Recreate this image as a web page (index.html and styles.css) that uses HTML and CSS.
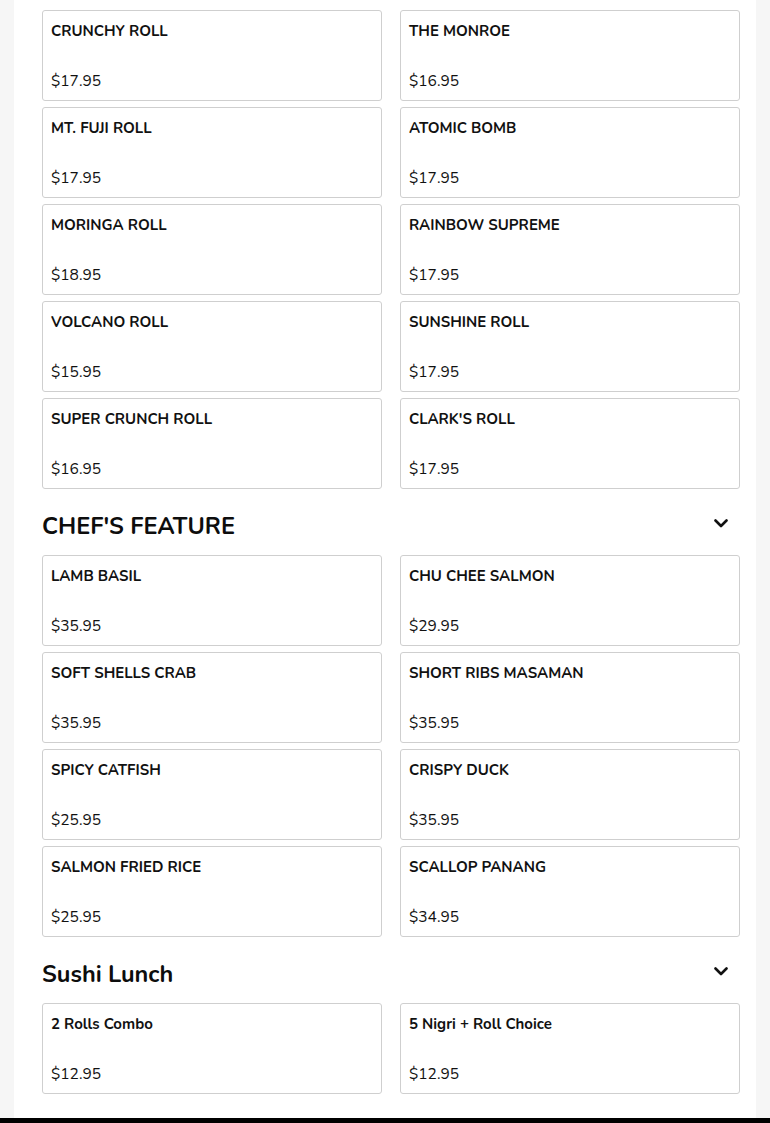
FILE: index.html
```html
<!DOCTYPE html>
<html>
<head>
<meta charset="utf-8">
<link rel="stylesheet" href="styles.css">
</head>
<body>
<main class="menu">
  <section class="section">
    <div class="grid">
      <div class="card"><div class="name">CRUNCHY ROLL</div><div class="price">$17.95</div></div>
      <div class="card"><div class="name">THE MONROE</div><div class="price">$16.95</div></div>
      <div class="card"><div class="name">MT. FUJI ROLL</div><div class="price">$17.95</div></div>
      <div class="card"><div class="name">ATOMIC BOMB</div><div class="price">$17.95</div></div>
      <div class="card"><div class="name">MORINGA ROLL</div><div class="price">$18.95</div></div>
      <div class="card"><div class="name">RAINBOW SUPREME</div><div class="price">$17.95</div></div>
      <div class="card"><div class="name">VOLCANO ROLL</div><div class="price">$15.95</div></div>
      <div class="card"><div class="name">SUNSHINE ROLL</div><div class="price">$17.95</div></div>
      <div class="card"><div class="name">SUPER CRUNCH ROLL</div><div class="price">$16.95</div></div>
      <div class="card"><div class="name">CLARK'S ROLL</div><div class="price">$17.95</div></div>
    </div>
  </section>
  <section class="section">
    <div class="head">
      <h2 class="title">CHEF'S FEATURE</h2>
      <svg class="chev" width="14" height="10" viewBox="0 0 14 10"><path d="M1.5 2.5 L7 8 L12.5 2.5" fill="none" stroke="#111" stroke-width="2.6" stroke-linecap="round" stroke-linejoin="round"/></svg>
    </div>
    <div class="grid">
      <div class="card"><div class="name">LAMB BASIL</div><div class="price">$35.95</div></div>
      <div class="card"><div class="name">CHU CHEE SALMON</div><div class="price">$29.95</div></div>
      <div class="card"><div class="name">SOFT SHELLS CRAB</div><div class="price">$35.95</div></div>
      <div class="card"><div class="name">SHORT RIBS MASAMAN</div><div class="price">$35.95</div></div>
      <div class="card"><div class="name">SPICY CATFISH</div><div class="price">$25.95</div></div>
      <div class="card"><div class="name">CRISPY DUCK</div><div class="price">$35.95</div></div>
      <div class="card"><div class="name">SALMON FRIED RICE</div><div class="price">$25.95</div></div>
      <div class="card"><div class="name">SCALLOP PANANG</div><div class="price">$34.95</div></div>
    </div>
  </section>
  <section class="section">
    <div class="head">
      <h2 class="title">Sushi Lunch</h2>
      <svg class="chev" width="14" height="10" viewBox="0 0 14 10"><path d="M1.5 2.5 L7 8 L12.5 2.5" fill="none" stroke="#111" stroke-width="2.6" stroke-linecap="round" stroke-linejoin="round"/></svg>
    </div>
    <div class="grid">
      <div class="card"><div class="name">2 Rolls Combo</div><div class="price">$12.95</div></div>
      <div class="card"><div class="name">5 Nigri + Roll Choice</div><div class="price">$12.95</div></div>
    </div>
  </section>
</main>
<footer class="footer"></footer>
</body>
</html>
```
FILE: styles.css
```css
html, body {
  margin: 0;
  padding: 0;
}
body {
  background: #f6f6f6;
  font-family: "Nunito", "Lato", "Noto Sans", sans-serif;
  color: #111;
}
.menu {
  margin: 0 14px;
  background: #fff;
  padding: 10px 16px 24px 28px;
}
.grid {
  display: grid;
  grid-template-columns: 340px 340px;
  column-gap: 18px;
  row-gap: 6px;
}
.card {
  box-sizing: border-box;
  min-height: 91px;
  border: 1px solid #cfcfcf;
  border-radius: 3px;
  padding: 8px 8px 7px;
  display: flex;
  flex-direction: column;
  justify-content: space-between;
  background: #fff;
}
.name {
  font-size: 15px;
  font-weight: 700;
  line-height: 24px;
}
.price {
  font-size: 15.5px;
  font-weight: 400;
  line-height: 24px;
}
.head {
  display: flex;
  align-items: center;
  justify-content: space-between;
  margin: 21.5px 0 14.5px;
  height: 30px;
}
.title {
  margin: 0;
  font-size: 23.5px;
  font-weight: 700;
  line-height: 30px;
  color: #0d0d0d;
}
.chev {
  margin-right: 12px;
  margin-top: -6px;
}
.footer {
  height: 60px;
  background: #000;
}
```
